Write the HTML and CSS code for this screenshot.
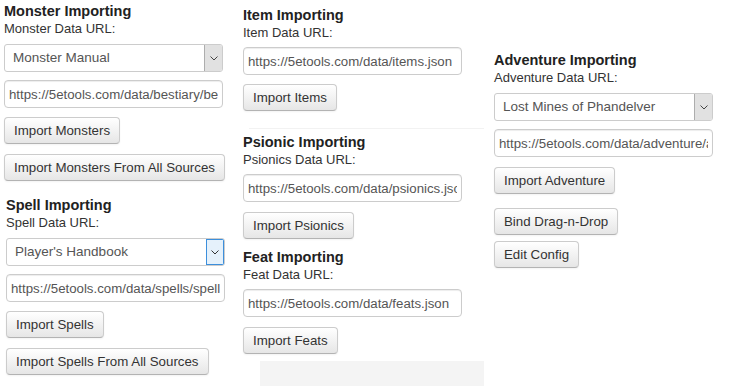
FILE: index.html
```html
<!DOCTYPE html>
<html lang="en">
<head>
    <meta charset="UTF-8">
    <title>Importer</title>
    <link rel="stylesheet" href="styles.css">
</head>
<body>
    <div class="importer">
        <div class="col col-monster">
            <div class="section">
                <div class="section-title">Monster Importing</div>
                <label class="field-label">Monster Data URL:</label>
                <div class="select">
                    <span class="select-value">Monster Manual</span>
                    <span class="select-arrow">
                        <svg width="8" height="5" viewBox="0 0 8 5"><polyline points="0.5,0.5 4,4 7.5,0.5" fill="none" stroke="#444" stroke-width="1"/></svg>
                    </span>
                </div>
                <input class="url-input" type="text" value="https://5etools.com/data/bestiary/bestiary-mm.json">
                <button class="btn">Import Monsters</button>
                <button class="btn">Import Monsters From All Sources</button>
            </div>
            <div class="section section-spell">
                <div class="section-title">Spell Importing</div>
                <label class="field-label">Spell Data URL:</label>
                <div class="select">
                    <span class="select-value">Player's Handbook</span>
                    <span class="select-arrow select-arrow-focus">
                        <svg width="8" height="5" viewBox="0 0 8 5"><polyline points="0.5,0.5 4,4 7.5,0.5" fill="none" stroke="#333" stroke-width="1"/></svg>
                    </span>
                </div>
                <input class="url-input" type="text" value="https://5etools.com/data/spells/spells-phb.json">
                <button class="btn">Import Spells</button>
                <button class="btn">Import Spells From All Sources</button>
            </div>
        </div>

        <div class="col col-item">
            <div class="section">
                <div class="section-title">Item Importing</div>
                <label class="field-label">Item Data URL:</label>
                <input class="url-input url-input-tight" type="text" value="https://5etools.com/data/items.json">
                <button class="btn">Import Items</button>
            </div>
            <div class="divider"></div>
            <div class="section section-psionic">
                <div class="section-title">Psionic Importing</div>
                <label class="field-label">Psionics Data URL:</label>
                <input class="url-input url-input-tight" type="text" value="https://5etools.com/data/psionics.json">
                <button class="btn btn-loose">Import Psionics</button>
            </div>
            <div class="section section-feat">
                <div class="section-title">Feat Importing</div>
                <label class="field-label">Feat Data URL:</label>
                <input class="url-input url-input-tight" type="text" value="https://5etools.com/data/feats.json">
                <button class="btn btn-loose">Import Feats</button>
            </div>
            <div class="footer-strip"></div>
        </div>

        <div class="col col-adventure">
            <div class="section">
                <div class="section-title">Adventure Importing</div>
                <label class="field-label">Adventure Data URL:</label>
                <div class="select">
                    <span class="select-value">Lost Mines of Phandelver</span>
                    <span class="select-arrow">
                        <svg width="8" height="5" viewBox="0 0 8 5"><polyline points="0.5,0.5 4,4 7.5,0.5" fill="none" stroke="#444" stroke-width="1"/></svg>
                    </span>
                </div>
                <input class="url-input" type="text" value="https://5etools.com/data/adventure/adventure-lmop.json">
                <button class="btn btn-loose">Import Adventure</button>
            </div>
            <div class="tools">
                <button class="btn">Bind Drag-n-Drop</button>
                <button class="btn btn-close">Edit Config</button>
            </div>
        </div>
    </div>
</body>
</html>
```

FILE: styles.css
```css
* {
    margin: 0;
    padding: 0;
    box-sizing: border-box;
}

body {
    font-family: "Liberation Sans", Arial, sans-serif;
    font-size: 13px;
    color: #333;
    background: #fff;
    width: 732px;
    height: 386px;
    overflow: hidden;
}

.importer {
    display: flex;
    align-items: flex-start;
}

.col {
    width: 220px;
    display: flex;
    flex-direction: column;
}

.col-monster {
    margin-left: 4px;
    padding-top: 2px;
}

.col-item {
    margin-left: 19px;
    padding-top: 6px;
}

.col-adventure {
    margin-left: 31px;
    padding-top: 51px;
}

.section {
    display: flex;
    flex-direction: column;
    align-items: flex-start;
}

.section-spell {
    margin-left: 2px;
    margin-top: 15px;
}

.section-psionic {
    margin-top: 4px;
}

.section-feat {
    margin-top: 9px;
}

.section-title {
    font-size: 14.5px;
    font-weight: bold;
    line-height: 18px;
    color: #222;
}

.field-label {
    line-height: 18px;
    color: #333;
}

.select {
    display: flex;
    width: 219px;
    height: 28px;
    margin-top: 6px;
    border: 1px solid #ccc;
    border-radius: 3px;
    background: #fff;
    overflow: hidden;
}

.select-value {
    flex: 1;
    padding-left: 8px;
    line-height: 26px;
    font-size: 13.5px;
    color: #555;
    white-space: nowrap;
}

.select-arrow {
    width: 18px;
    display: flex;
    align-items: center;
    justify-content: center;
    background: #e1e1e1;
    border-left: 1px solid #adadad;
}

.select-arrow-focus {
    background: #e5f1fb;
    border: 1px solid #3c8fdc;
}

.url-input {
    width: 219px;
    height: 28px;
    margin-top: 8px;
    padding: 0 4px;
    font-family: inherit;
    font-size: 13.25px;
    color: #555;
    background: #fff;
    border: 1px solid #ccc;
    border-radius: 4px;
    box-shadow: inset 0 1px 1px rgba(0, 0, 0, 0.075);
    outline: none;
}

.url-input-tight {
    margin-top: 5px;
}

.btn {
    height: 27px;
    margin-top: 9px;
    padding: 0 9px;
    font-family: inherit;
    font-size: 13.3px;
    color: #333;
    line-height: 25px;
    white-space: nowrap;
    background: linear-gradient(to bottom, #fff, #e6e6e6);
    border: 1px solid #ccc;
    border-bottom-color: #b3b3b3;
    border-radius: 4px;
    box-shadow: inset 0 1px 0 rgba(255, 255, 255, 0.2), 0 1px 2px rgba(0, 0, 0, 0.05);
    cursor: pointer;
}

.btn + .btn,
.btn-loose {
    margin-top: 10px;
}

.divider {
    margin: 17px 0 0 6px;
    width: 235px;
    height: 1px;
    background: #f2f2f2;
}

.footer-strip {
    margin: 7px 0 0 17px;
    width: 224px;
    height: 25px;
    background: #f4f4f4;
}

.tools {
    display: flex;
    flex-direction: column;
    align-items: flex-start;
}

.tools .btn {
    margin-top: 14px;
}

.tools .btn-close {
    margin-top: 6px;
}
```
